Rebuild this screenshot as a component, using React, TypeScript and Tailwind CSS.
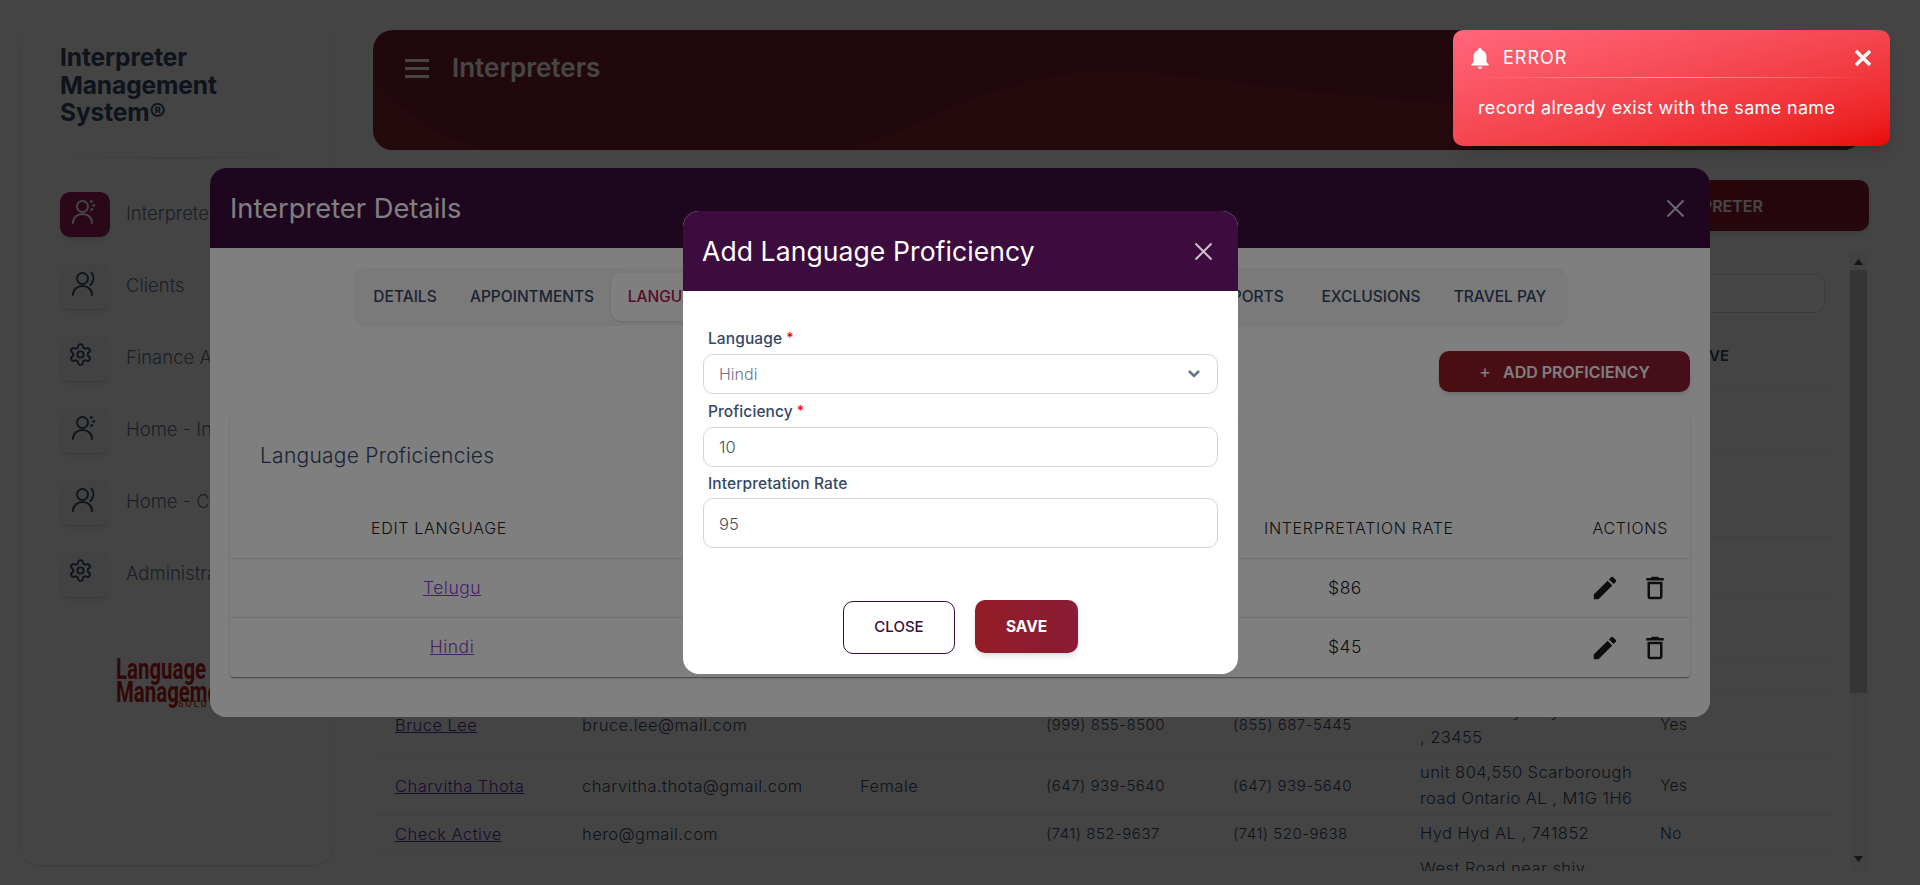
import React from "react";
import { MdEdit, MdDeleteOutline, MdNotifications } from "react-icons/md";

const PersonDots = () => (
  <svg width="28" height="28" viewBox="0 0 28 28" fill="none" stroke="currentColor" strokeWidth="2" strokeLinecap="round">
    <circle cx="11.5" cy="8.5" r="5.5" />
    <path d="M2 25c0-5.5 4-9 9.5-9s9.5 3.5 9.5 9" />
    <path d="M20 3.5h.6M22.5 7.5h.6M20.5 11.5h.6" strokeWidth="2.4" />
  </svg>
);

const PersonWave = () => (
  <svg width="28" height="28" viewBox="0 0 28 28" fill="none" stroke="currentColor" strokeWidth="2" strokeLinecap="round">
    <circle cx="11.5" cy="8.5" r="5.5" />
    <path d="M2 25c0-5.5 4-9 9.5-9s9.5 3.5 9.5 9" />
    <path d="M20.5 2.5c2.6 3.5 2.6 8.5-.8 12.5" />
  </svg>
);

const Gear = () => (
  <svg className="mr-[9px] mb-[3px]" width="25" height="25" viewBox="0 0 24 24" fill="none" stroke="currentColor" strokeWidth="1.8" strokeLinecap="round" strokeLinejoin="round">
    <path d="M12.22 2h-.44a2 2 0 0 0-2 2v.18a2 2 0 0 1-1 1.73l-.43.25a2 2 0 0 1-2 0l-.15-.08a2 2 0 0 0-2.73.73l-.22.38a2 2 0 0 0 .73 2.73l.15.1a2 2 0 0 1 1 1.72v.51a2 2 0 0 1-1 1.74l-.15.09a2 2 0 0 0-.73 2.73l.22.38a2 2 0 0 0 2.73.73l.15-.08a2 2 0 0 1 2 0l.43.25a2 2 0 0 1 1 1.73V20a2 2 0 0 0 2 2h.44a2 2 0 0 0 2-2v-.18a2 2 0 0 1 1-1.73l.43-.25a2 2 0 0 1 2 0l.15.08a2 2 0 0 0 2.73-.73l.22-.39a2 2 0 0 0-.73-2.73l-.15-.08a2 2 0 0 1-1-1.74v-.5a2 2 0 0 1 1-1.74l.15-.09a2 2 0 0 0 .73-2.73l-.22-.38a2 2 0 0 0-2.73-.73l-.15.08a2 2 0 0 1-2 0l-.43-.25a2 2 0 0 1-1-1.73V4a2 2 0 0 0-2-2z" />
    <circle cx="12" cy="12" r="3" />
  </svg>
);

const ThinX = () => (
  <svg width="19" height="19" viewBox="0 0 19 19" fill="none" stroke="currentColor" strokeWidth="2">
    <path d="M1.5 1.5l16 16M17.5 1.5l-16 16" />
  </svg>
);

const navItems = [
  { label: "Interpreters", icon: <PersonDots />, active: true },
  { label: "Clients", icon: <PersonWave /> },
  { label: "Finance Admin", icon: <Gear /> },
  { label: "Home - Interpreter", icon: <PersonDots /> },
  { label: "Home - Client", icon: <PersonWave /> },
  { label: "Administration", icon: <Gear /> },
];

type Row = {
  h: string;
  name?: string;
  email?: string;
  gender?: string;
  p1?: string;
  p2?: string;
  addr?: string[];
  active?: string;
};

const rows: Row[] = [
  { h: "h-[62px]" },
  { h: "h-[87px]" },
  { h: "h-[61px]" },
  { h: "h-[61px]" },
  { h: "h-[35px]" },
  {
    h: "h-[61px]",
    name: "Bruce Lee",
    email: "bruce.lee@mail.com",
    p1: "(999) 855-8500",
    p2: "(855) 687-5445",
    addr: ["Main Hall Hyd Hyd", ", 23455"],
    active: "Yes",
  },
  {
    h: "h-[61px]",
    name: "Charvitha Thota",
    email: "charvitha.thota@gmail.com",
    gender: "Female",
    p1: "(647) 939-5640",
    p2: "(647) 939-5640",
    addr: ["unit 804,550 Scarborough", "road Ontario AL , M1G 1H6"],
    active: "Yes",
  },
  {
    h: "h-[35px]",
    name: "Check Active",
    email: "hero@gmail.com",
    p1: "(741) 852-9637",
    p2: "(741) 520-9638",
    addr: ["Hyd Hyd AL , 741852"],
    active: "No",
  },
  { h: "h-[61px]", addr: ["West Road near shiv", "temple"] },
];

function Sidebar() {
  return (
    <aside className="mt-5 ml-5 h-[845px] w-[313px] shrink-0 rounded-[20px] bg-[#f9fafb] shadow-sm">
      <div className="px-10 pt-[24px] text-[24.5px] font-bold leading-[27.5px] tracking-[-0.1px] text-[#344767]">
        Interpreter
        <br />
        Management
        <br />
        System®
      </div>
      <div className="mx-2 mt-[30px] h-px bg-gradient-to-r from-transparent via-[#d8d8d8] to-transparent" />
      <nav className="mt-[34px] flex flex-col gap-[27px] pl-10">
        {navItems.map((n) => (
          <div key={n.label} className="flex h-[45px] items-center">
            <div
              className={
                n.active
                  ? "flex h-[45px] w-[50px] items-center justify-center rounded-[10px] bg-[#9c1a5c] pb-1 text-white shadow-md"
                  : "flex h-[45px] w-[50px] items-center justify-center rounded-[10px] bg-[#f0f3f4] pb-1 text-[#344767] shadow-md"
              }
            >
              {n.icon}
            </div>
            <span className="ml-4 whitespace-nowrap text-[18.5px] font-light text-[#67748e]">{n.label}</span>
          </div>
        ))}
      </nav>
      <div className="mt-[58px] pl-[96px] text-[#b81c1c] [font-family:Roboto,sans-serif]">
        <div className="h-[23px] origin-left scale-x-[0.68] whitespace-nowrap text-[30px] font-bold leading-[28px]">Language</div>
        <div className="h-[22px] origin-left scale-x-[0.68] whitespace-nowrap text-[30px] font-bold leading-[28px]">Management</div>
        <div className="ml-[62px] text-[9px] font-bold leading-[9px] tracking-[2px] text-[#b8501a]">SOLUTIONS</div>
      </div>
    </aside>
  );
}

function BaseTable() {
  return (
    <div className="mt-[21px] flex h-[619px] w-[1494px] overflow-hidden">
      <div className="flex-1">
        <div className="flex h-[83px] justify-end pt-[22px] pr-[25px]">
          <div className="h-[39px] w-[300px] rounded-[10px] border border-[#d2d6da] bg-white" />
        </div>
        <div className="mr-[14px] flex h-[53px] items-center justify-end border-b border-[#e9ecef] pr-[107px] pb-[10px] text-[15px] font-semibold text-[#344767]">
          ACTIVE
        </div>
        <div className="mr-[14px]">
          {rows.map((r, i) => (
            <div
              key={i}
              className={`grid ${r.h} grid-cols-[187px_278px_186px_187px_187px_240px_1fr] items-center border-b border-[#e9ecef] pt-[2px] pl-[22px] text-[16.5px] font-light tracking-[0.45px] text-[#344767]`}
            >
              <a className="text-[#5a2ca8] underline">{r.name}</a>
              <span>{r.email}</span>
              <span>{r.gender}</span>
              <span className="text-[15px] tracking-[0.5px]">{r.p1}</span>
              <span className="text-[15px] tracking-[0.5px]">{r.p2}</span>
              <span className="-mt-[2px] leading-[26px]">
                {r.addr?.map((a) => (
                  <span key={a} className="block whitespace-nowrap">
                    {a}
                  </span>
                ))}
              </span>
              <span className="text-[15.5px]">{r.active}</span>
            </div>
          ))}
        </div>
      </div>
      <div className="flex h-full w-[17px] shrink-0 flex-col items-center bg-[#f1f1f1]">
        <svg className="mt-[7px] mb-[5px] shrink-0" width="9" height="6" viewBox="0 0 9 6" fill="#505050">
          <path d="M4.5 0L9 6H0z" />
        </svg>
        <div className="h-[423px] w-[17px] shrink-0 bg-[#c1c1c1]" />
        <div className="flex-1" />
        <svg className="mb-[9px] shrink-0" width="9" height="6" viewBox="0 0 9 6" fill="#505050">
          <path d="M4.5 6L9 0H0z" />
        </svg>
      </div>
    </div>
  );
}

function Main() {
  return (
    <main className="ml-10 flex w-[1496px] shrink-0 flex-col">
      <header className="relative mt-[30px] h-[120px] w-[1490px] overflow-hidden rounded-[20px] bg-[#7a202d] text-white">
        <svg className="absolute inset-0" width="1490" height="120" viewBox="0 0 1490 120" fill="none">
          <path d="M0 55C40 90 70 110 110 120H480C560 90 640 35 760 42C900 50 1040 95 1490 70V120H0z" fill="#842331" />
          <path d="M0 55C40 90 70 110 110 120" stroke="#8e2838" />
        </svg>
        <div className="relative flex items-center pt-[20px] pl-8">
          <div className="flex w-[24px] flex-col gap-[5px]">
            <div className="h-[3px] bg-white" />
            <div className="h-[3px] bg-white" />
            <div className="h-[3px] bg-white" />
          </div>
          <h1 className="ml-[13px] pl-[10px] text-[26px] font-semibold leading-[36px]">Interpreters</h1>
        </div>
      </header>
      <div className="mt-[30px] flex justify-end">
        <div className="flex h-[51px] w-[300px] items-center justify-end rounded-[10px] bg-gradient-to-r from-[#941c24] to-[#8a1c36] pr-[106px] text-[16px] font-semibold text-white shadow-md">
          ADD INTERPRETER
        </div>
      </div>
      <BaseTable />
    </main>
  );
}

function DetailsDialog() {
  return (
    <section className="absolute top-[168px] left-[210px] flex h-[549px] w-[1500px] flex-col overflow-hidden rounded-[16px] bg-white">
      <div className="flex h-[80px] shrink-0 items-center justify-between bg-[#3d0c3e] pr-[25px] pl-5 text-white">
        <h2 className="pt-[3px] text-[27.3px] font-normal">Interpreter Details</h2>
        <span className="opacity-80">
          <ThinX />
        </span>
      </div>
      <div className="mx-auto mt-5 flex h-[58px] w-[1215px] items-center rounded-[12px] bg-[#f4f4f4] px-1 text-[15.5px] font-medium text-[#344767]">
        <span className="w-[97px] shrink-0 text-center">DETAILS</span>
        <span className="w-[157px] shrink-0 text-center">APPOINTMENTS</span>
        <span className="flex h-[48px] w-[130px] shrink-0 items-center justify-center rounded-[10px] bg-white text-[#b0144f] shadow-sm">
          LANGUAGES
        </span>
        <span className="flex-1" />
        <span className="w-[115px] shrink-0 text-center">REPORTS</span>
        <span className="w-[131px] shrink-0 text-center">EXCLUSIONS</span>
        <span className="w-[127px] shrink-0 text-center">TRAVEL PAY</span>
      </div>
      <div className="mt-[25px] mr-5 flex justify-end">
        <div className="flex h-[41px] w-[251px] items-center justify-center gap-3 rounded-[10px] bg-gradient-to-r from-[#941c24] to-[#8a1c36] text-[16px] font-semibold text-white shadow-md">
          <span className="text-[18px] font-normal leading-none">+</span>
          ADD PROFICIENCY
        </div>
      </div>
      <div className="mx-5 mt-[25px] h-[260px] rounded-[4px] bg-white shadow-[0_2px_1px_-1px_rgba(0,0,0,0.35),0_1px_3px_rgba(0,0,0,0.2)]">
        <h3 className="h-[96px] pt-[25px] pl-[30px] text-[21px] font-light leading-[28px] tracking-[0.25px] text-[#344767]">
          Language Proficiencies
        </h3>
        <div className="grid h-[46px] grid-cols-[444px_1fr_214px_238px] border-b border-[#e4e4e4] pt-[3px] text-[16px] font-light leading-[24px] tracking-[0.7px] text-[#222]">
          <span className="pr-[26px] text-center">EDIT LANGUAGE</span>
          <span />
          <span className="whitespace-nowrap pl-[26px] text-center">INTERPRETATION RATE</span>
          <span className="pr-[22px] text-right">ACTIONS</span>
        </div>
        {[
          ["Telugu", "$86"],
          ["Hindi", "$45"],
        ].map(([lang, rate], i) => (
          <div
            key={lang}
            className={`grid h-[59px] grid-cols-[444px_1fr_214px_238px] items-center text-[17.5px] font-light tracking-[0.5px] text-[#222] ${
              i === 0 ? "border-b border-[#e4e4e4]" : ""
            }`}
          >
            <a className="text-center text-[#8a3fd8] underline">{lang}</a>
            <span />
            <span className="text-center">{rate}</span>
            <span className="flex items-center justify-end gap-5 pr-5 text-[#1c1c1c]">
              <MdEdit size={30} />
              <MdDeleteOutline size={30} />
            </span>
          </div>
        ))}
      </div>
    </section>
  );
}

function Label({ children, req }: { children: React.ReactNode; req?: boolean }) {
  return (
    <label className="block h-5 pl-[5px] text-[15.5px] font-medium leading-5 tracking-[0.1px] text-[#344767]">
      {children}
      {req && <span className="relative -top-px ml-1 text-[14px] text-[#f00]">*</span>}
    </label>
  );
}

function ProficiencyDialog() {
  const field = "block w-full rounded-[10px] border border-[#d2d6da] bg-white pl-[15px] text-[16.5px] font-light text-[#495057] outline-none";
  return (
    <section className="absolute top-[211px] left-[683px] h-[463px] w-[555px] overflow-hidden rounded-[16px] bg-white">
      <div className="flex h-[80px] items-center justify-between bg-[#3d0c3e] pr-[25px] pl-[19px] text-white">
        <h2 className="pt-px text-[26.5px] font-normal tracking-[0.1px]">Add Language Proficiency</h2>
        <span className="opacity-75">
          <ThinX />
        </span>
      </div>
      <div className="px-5 pt-[38px]">
        <Label req>Language</Label>
        <div className="mt-[5px] flex h-[40px] items-center justify-between rounded-[10px] border border-[#d2d6da] pr-4 pl-[15px] text-[16px] font-light text-[#67748e]">
          Hindi
          <svg width="14" height="10" viewBox="0 0 14 10" fill="none" stroke="#67748e" strokeWidth="2.6">
            <path d="M2 2l5 5 5-5" />
          </svg>
        </div>
        <div className="mt-2">
          <Label req>Proficiency</Label>
        </div>
        <input readOnly value="10" className={`${field} mt-[5px] h-[40px]`} />
        <div className="mt-[7px]">
          <Label>Interpretation Rate</Label>
        </div>
        <input readOnly value="95" className={`${field} mt-1 h-[50px] pt-px`} />
        <div className="mt-[53px] flex justify-center gap-5">
          <button className="h-[53px] w-[112px] rounded-[10px] border border-[#3d0c3e] text-[15px] font-medium text-[#3d0c3e]">
            CLOSE
          </button>
          <button className="-mt-px h-[53px] w-[103px] rounded-[10px] bg-gradient-to-r from-[#941c24] to-[#8a1c36] text-[15.5px] font-bold text-white shadow-md">
            SAVE
          </button>
        </div>
      </div>
    </section>
  );
}

function Toast() {
  return (
    <div className="absolute top-[30px] left-[1453px] h-[116px] w-[437px] rounded-[10px] bg-gradient-to-br from-[#ff667c] to-[#ea0606] text-white shadow-lg">
      <div className="flex h-[47px] items-center pt-[8px] pr-[18px] pl-[14px]">
        <MdNotifications size={26} />
        <span className="ml-[10px] flex-1 text-[18px] tracking-[1px]">ERROR</span>
        <svg width="18" height="18" viewBox="0 0 18 18" fill="none" stroke="white" strokeWidth="3.4">
          <path d="M2 2l14 14M16 2L2 16" />
        </svg>
      </div>
      <div className="mx-[18px] h-px bg-gradient-to-r from-transparent via-white/50 to-transparent" />
      <div className="mt-[16px] pl-[25px] text-[18px] font-normal tracking-[0.34px]">record already exist with the same name</div>
    </div>
  );
}

export default function App() {
  return (
    <div className="relative flex h-[885px] w-[1920px] overflow-hidden bg-[#f8f9fa] [font-family:Inter,sans-serif]">
      <Sidebar />
      <Main />
      <div className="absolute inset-0 bg-black/45" />
      <DetailsDialog />
      <div className="absolute inset-0 bg-black/50" />
      <ProficiencyDialog />
      <Toast />
    </div>
  );
}
